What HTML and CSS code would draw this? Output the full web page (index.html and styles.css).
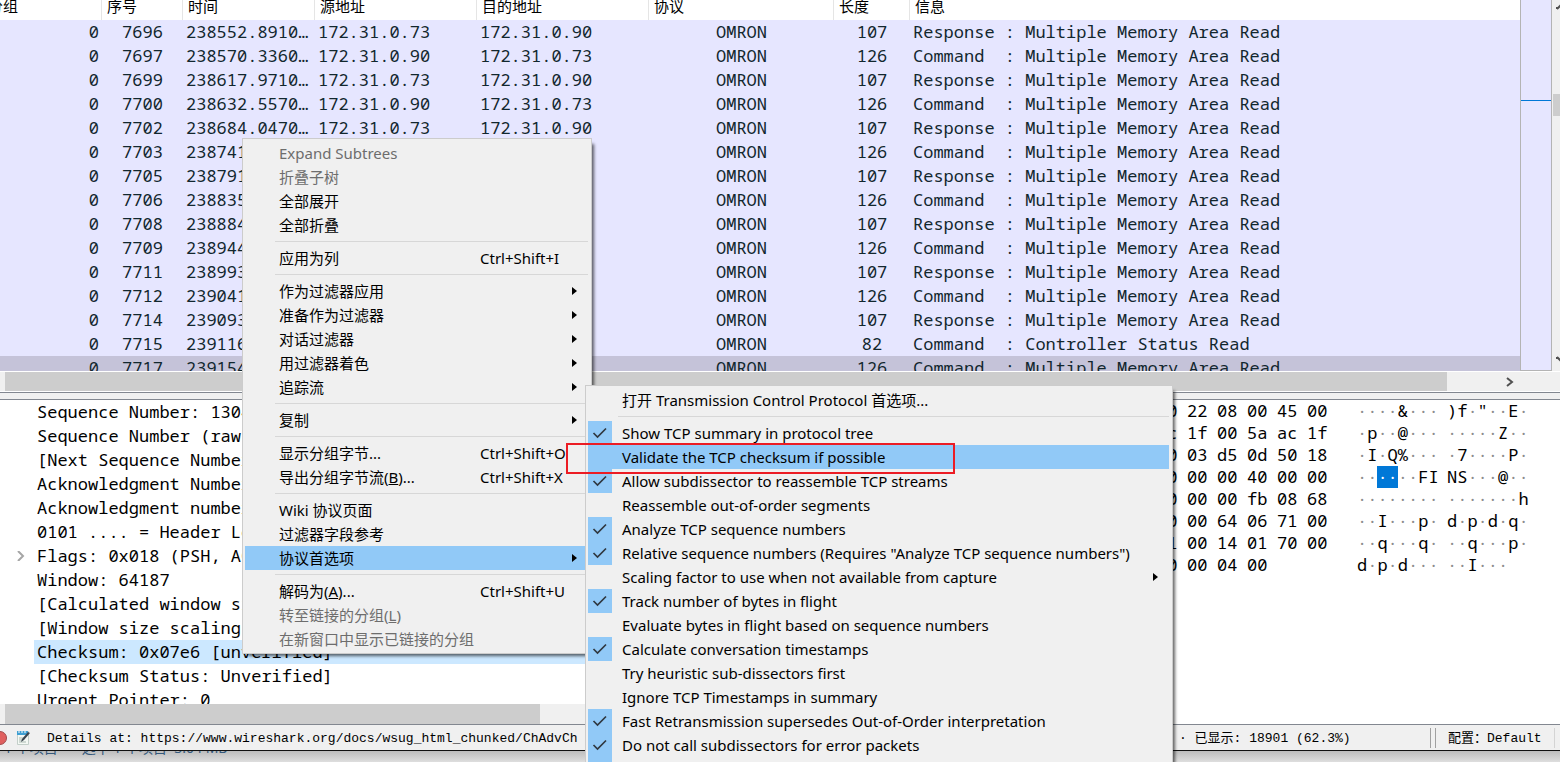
FILE: index.html
```html
<!DOCTYPE html>
<html lang="zh-CN">
<head>
<meta charset="utf-8">
<title>Wireshark</title>
<link rel="stylesheet" href="styles.css">
</head>
<body>
<div class="app">
  <section class="packets">
    <div class="packet-view">
      <table class="packet-table">
        <colgroup><col class="c-group"><col class="c-no"><col class="c-time"><col class="c-src"><col class="c-dst"><col class="c-proto"><col class="c-len"><col></colgroup>
        <thead><tr><th class="cut"><span>分组</span></th><th>序号</th><th>时间</th><th>源地址</th><th>目的地址</th><th>协议</th><th>长度</th><th>信息</th></tr></thead>
        <tbody>
          <tr><td>0</td><td>7696</td><td>238552.8910…</td><td>172.31.0.73</td><td>172.31.0.90</td><td>OMRON</td><td>107</td><td>Response : Multiple Memory Area Read</td></tr>
          <tr><td>0</td><td>7697</td><td>238570.3360…</td><td>172.31.0.90</td><td>172.31.0.73</td><td>OMRON</td><td>126</td><td>Command  : Multiple Memory Area Read</td></tr>
          <tr><td>0</td><td>7699</td><td>238617.9710…</td><td>172.31.0.73</td><td>172.31.0.90</td><td>OMRON</td><td>107</td><td>Response : Multiple Memory Area Read</td></tr>
          <tr><td>0</td><td>7700</td><td>238632.5570…</td><td>172.31.0.90</td><td>172.31.0.73</td><td>OMRON</td><td>126</td><td>Command  : Multiple Memory Area Read</td></tr>
          <tr><td>0</td><td>7702</td><td>238684.0470…</td><td>172.31.0.73</td><td>172.31.0.90</td><td>OMRON</td><td>107</td><td>Response : Multiple Memory Area Read</td></tr>
          <tr><td>0</td><td>7703</td><td>238741</td><td></td><td></td><td>OMRON</td><td>126</td><td>Command  : Multiple Memory Area Read</td></tr>
          <tr><td>0</td><td>7705</td><td>238791</td><td></td><td></td><td>OMRON</td><td>107</td><td>Response : Multiple Memory Area Read</td></tr>
          <tr><td>0</td><td>7706</td><td>238835</td><td></td><td></td><td>OMRON</td><td>126</td><td>Command  : Multiple Memory Area Read</td></tr>
          <tr><td>0</td><td>7708</td><td>238884</td><td></td><td></td><td>OMRON</td><td>107</td><td>Response : Multiple Memory Area Read</td></tr>
          <tr><td>0</td><td>7709</td><td>238944</td><td></td><td></td><td>OMRON</td><td>126</td><td>Command  : Multiple Memory Area Read</td></tr>
          <tr><td>0</td><td>7711</td><td>238993</td><td></td><td></td><td>OMRON</td><td>107</td><td>Response : Multiple Memory Area Read</td></tr>
          <tr><td>0</td><td>7712</td><td>239041</td><td></td><td></td><td>OMRON</td><td>126</td><td>Command  : Multiple Memory Area Read</td></tr>
          <tr><td>0</td><td>7714</td><td>239093</td><td></td><td></td><td>OMRON</td><td>107</td><td>Response : Multiple Memory Area Read</td></tr>
          <tr><td>0</td><td>7715</td><td>239116</td><td></td><td></td><td>OMRON</td><td>82</td><td>Command  : Controller Status Read</td></tr>
          <tr class="current"><td>0</td><td>7717</td><td>239154</td><td></td><td></td><td>OMRON</td><td>126</td><td>Command  : Multiple Memory Area Read</td></tr>
        </tbody>
      </table>
    </div>
    <div class="minimap"><div class="marker"></div></div>
    <div class="vscroll">
      <svg class="arrow" viewBox="0 0 8 8"><path d="M5 7 9 3M5 7V5" /></svg>
      <div class="vthumb"></div>
      <svg class="arrow end" viewBox="0 0 8 8"><path d="M5 1 9 5M5 1V3" /></svg>
    </div>
  </section>
  <div class="hscroll list-scroll"><div class="hthumb"></div>
    <svg class="chevron" viewBox="0 0 10 10"><path d="M2 1 7 5 2 9"/></svg>
  </div>
  <div class="splitter"></div>
  <section class="panes">
    <div class="details">
      <div class="tree">
        <div class="line">Sequence Number: 1304</div>
        <div class="line">Sequence Number (raw)</div>
        <div class="line">[Next Sequence Number</div>
        <div class="line">Acknowledgment Number</div>
        <div class="line">Acknowledgment number</div>
        <div class="line">0101 .... = Header Le</div>
        <div class="line branch"><svg class="twisty" viewBox="0 0 10 10"><path d="M2 0 7 5 2 10"/></svg>Flags: 0x018 (PSH, AC</div>
        <div class="line">Window: 64187</div>
        <div class="line">[Calculated window si</div>
        <div class="line">[Window size scaling</div>
        <div class="line picked">Checksum: 0x07e6 [unverified]</div>
        <div class="line">[Checksum Status: Unverified]</div>
        <div class="line">Urgent Pointer: 0</div>
      </div>
      <div class="hscroll"><div class="hthumb short"></div></div>
    </div>
    <div class="bytes">
      <table class="hex">
        <tr><td>00</td><td>22</td><td>08</td><td>00</td><td>45</td><td>00</td></tr>
        <tr><td>ac</td><td>1f</td><td>00</td><td>5a</td><td>ac</td><td>1f</td></tr>
        <tr><td>00</td><td>03</td><td>d5</td><td>0d</td><td>50</td><td>18</td></tr>
        <tr><td>00</td><td>00</td><td>00</td><td>40</td><td>00</td><td>00</td></tr>
        <tr><td>00</td><td>00</td><td>00</td><td>fb</td><td>08</td><td>68</td></tr>
        <tr><td>00</td><td>00</td><td>64</td><td>06</td><td>71</td><td>00</td></tr>
        <tr><td>01</td><td>00</td><td>14</td><td>01</td><td>70</td><td>00</td></tr>
        <tr><td>00</td><td>00</td><td>04</td><td>00</td><td></td><td></td></tr>
      </table>
      <table class="ascii">
        <tr><td>····<b>&amp;</b>···</td><td><b>)f</b>·<b>"</b>··<b>E</b>·</td></tr>
        <tr><td>·<b>p</b>··<b>@</b>···</td><td>·····<b>Z</b>··</td></tr>
        <tr><td>·<b>I</b>·<b>Q%</b>···</td><td>·<b>7</b>····<b>P</b>·</td></tr>
        <tr><td>··<mark>··</mark>··<b>FI</b></td><td><b>NS</b>···<b>@</b>··</td></tr>
        <tr><td>········</td><td>·······<b>h</b></td></tr>
        <tr><td>··<b>I</b>···<b>p</b>·</td><td><b>d</b>·<b>p</b>·<b>d</b>·<b>q</b>·</td></tr>
        <tr><td>··<b>q</b>···<b>q</b>·</td><td>··<b>q</b>···<b>p</b>·</td></tr>
        <tr><td><b>d</b>·<b>p</b>·<b>d</b>···</td><td>··<b>I</b>···</td></tr>
      </table>
    </div>
  </section>
  <footer class="status">
    <svg class="expert" viewBox="0 0 8 16"><circle cx="0" cy="8" r="6.5" fill="#e0605f" stroke="#a04a4c"/></svg>
    <svg class="note" viewBox="0 0 16 16"><path d="M1.5 1.500h11v13h-11z" fill="#f4f8f4" stroke="#c3cfc9"/><path d="M1 1h11v4H1z" fill="#3f9fd2"/><path d="M3 1v2M6 1v2M9 1v2" stroke="#fff"/><path d="M3 8h5M3 10h4M3 12h7" stroke="#a9b9b0"/><path d="M6 9 12 2l2 1-6 7-3 2z" fill="#3c4650"/></svg>
    <span class="tip">Details at: https://www.wireshark.org/docs/wsug_html_chunked/ChAdvCh</span>
    <span class="shown">· 已显示: 18901 (62.3%)</span>
    <span class="profile">配置：Default</span>
  </footer>
  <div class="behind"><span>1 个项目</span><span>选中 1 个项目&nbsp; 3.04 MB</span></div>
</div>

<div class="menu context" role="menu">
  <button class="item" disabled>Expand Subtrees</button>
  <button class="item" disabled>折叠子树</button>
  <button class="item">全部展开</button>
  <button class="item">全部折叠</button>
  <hr>
  <button class="item">应用为列<kbd>Ctrl+Shift+I</kbd></button>
  <hr>
  <button class="item more">作为过滤器应用</button>
  <button class="item more">准备作为过滤器</button>
  <button class="item more">对话过滤器</button>
  <button class="item more">用过滤器着色</button>
  <button class="item more">追踪流</button>
  <hr>
  <button class="item more">复制</button>
  <hr>
  <button class="item">显示分组字节...<kbd>Ctrl+Shift+O</kbd></button>
  <button class="item"><span>导出分组字节流(<u>B</u>)...</span><kbd>Ctrl+Shift+X</kbd></button>
  <hr>
  <button class="item">Wiki 协议页面</button>
  <button class="item">过滤器字段参考</button>
  <button class="item more active">协议首选项</button>
  <hr>
  <button class="item"><span>解码为(<u>A</u>)...</span><kbd>Ctrl+Shift+U</kbd></button>
  <button class="item" disabled><span>转至链接的分组(<u>L</u>)</span></button>
  <button class="item" disabled>在新窗口中显示已链接的分组</button>
</div>

<div class="menu prefs" role="menu">
  <button class="item">打开 Transmission Control Protocol 首选项...</button>
  <hr>
  <label class="item check"><input type="checkbox" checked>Show TCP summary in protocol tree</label>
  <label class="item check active"><input type="checkbox">Validate the TCP checksum if possible<span class="callout"></span></label>
  <label class="item check"><input type="checkbox" checked>Allow subdissector to reassemble TCP streams</label>
  <label class="item check"><input type="checkbox">Reassemble out-of-order segments</label>
  <label class="item check"><input type="checkbox" checked>Analyze TCP sequence numbers</label>
  <label class="item check"><input type="checkbox" checked>Relative sequence numbers (Requires "Analyze TCP sequence numbers")</label>
  <button class="item more">Scaling factor to use when not available from capture</button>
  <label class="item check"><input type="checkbox" checked>Track number of bytes in flight</label>
  <label class="item check"><input type="checkbox">Evaluate bytes in flight based on sequence numbers</label>
  <label class="item check"><input type="checkbox" checked>Calculate conversation timestamps</label>
  <label class="item check"><input type="checkbox">Try heuristic sub-dissectors first</label>
  <label class="item check"><input type="checkbox">Ignore TCP Timestamps in summary</label>
  <label class="item check"><input type="checkbox" checked>Fast Retransmission supersedes Out-of-Order interpretation</label>
  <label class="item check"><input type="checkbox" checked>Do not call subdissectors for error packets</label>
  <div class="item next"></div>
</div>
</body>
</html>
```

FILE: styles.css
```css
* { box-sizing: border-box; }
:root {
  --mono: "Noto Sans Mono", "Liberation Mono", monospace;
  --ui: "Noto Sans", "Noto Sans CJK SC", sans-serif;
  --song: "Liberation Mono", "Noto Sans CJK SC", monospace;
  --face: #f0f0f0;
  --thumb: #cdcdcd;
  --accent: #91c9f7;
}
body { margin: 0; height: 100vh; overflow: hidden; position: relative; background: #fff; color: #000; font-family: var(--ui); }
svg { display: block; fill: none; }
table { border-collapse: separate; border-spacing: 0; }
th, td { padding: 0; }

.app { height: 100vh; display: flex; flex-direction: column; }

/* packet list */
.packets { flex: 371 0 0; min-height: 0; display: flex; overflow: hidden; background: var(--face); }
.packet-view { flex: 1; min-width: 0; overflow: hidden; background: #fff; }
.packet-table { width: 100%; table-layout: fixed; font: 17px/24px var(--mono); color: #12272e; }
.c-group { width: 102px; }
.c-no { width: 81px; }
.c-time { width: 132px; }
.c-src { width: 162px; }
.c-dst { width: 172px; }
.c-proto { width: 185px; }
.c-len { width: 76px; }
.packet-table th { height: 20px; padding: 0 0 0 5px; font: 15px/12px "Noto Sans CJK SC", sans-serif; text-align: left; vertical-align: top; color: #000; border-right: 1px solid #e5e5e5; }
.packet-table th.cut { padding-left: 0; }
.cut span { display: block; margin-left: -12px; }
.packet-table th:last-child { border-right: 0; }
.packet-table td { height: 24px; padding-left: 3px; white-space: pre; }
.packet-table tbody tr { background: #e6e6ff; }
.packet-table tbody tr.current { background: #c5c3d9; }
.packet-table td:nth-child(1) { text-align: right; padding-right: 3px; }
.packet-table td:nth-child(2), .packet-table td:nth-child(6), .packet-table td:nth-child(7) { text-align: center; padding-left: 0; }

.minimap { flex: 0 0 32px; border: 1px solid #b4b4b4; border-top: 0; background: #e6e6ff; padding-top: 100px; }
.marker { height: 1px; background: #0078d7; }
.vscroll { flex: 0 0 8px; display: flex; flex-direction: column; overflow: hidden; }
.arrow { width: 8px; height: 8px; margin-top: 2px; flex: none; stroke: #505050; stroke-width: 2; }
.arrow.end { margin-top: auto; margin-bottom: 7px; }
.vthumb { height: 22px; margin: 84px 0 0 1px; background: var(--thumb); }

.hscroll { flex: 0 0 20px; display: flex; align-items: center; background: var(--face); padding-left: 5px; }
.hthumb { flex: 1; align-self: stretch; background: var(--thumb); }
.hthumb.short { flex: 0 0 535px; }
.list-scroll { flex-basis: 21px; padding-right: 45px; border-top: 1px solid #fff; border-bottom: 1px solid #fff; }
.chevron { width: 10px; height: 10px; margin-left: 58px; stroke: #505050; stroke-width: 2; }
.splitter { flex: 0 0 8px; background: var(--face); border-top: 1px solid #828790; border-bottom: 1px solid #828790; }

/* details and bytes */
.panes { flex: 324 0 0; min-height: 0; display: flex; }
.details { flex: 1; min-width: 0; display: flex; flex-direction: column; }
.tree { flex: 1; min-height: 0; overflow: hidden; font: 17px/24px var(--mono); }
.line { height: 24px; margin-left: 34px; padding-left: 3px; white-space: pre; }
.branch { display: flex; align-items: center; margin-left: 16px; padding-left: 0; }
.twisty { width: 10px; height: 10px; margin-right: 11px; stroke: #a6a6a6; stroke-width: 2; }
.picked { background: #cce8ff; }
.bytes { flex: 0 0 600px; display: flex; justify-content: flex-end; align-items: flex-start; gap: 20px; padding-right: 23px; font: 17px/22px var(--mono); }
.hex td { width: 30px; height: 22px; }
.ascii td { width: 90px; height: 22px; color: #8c8c8c; white-space: pre; }
.ascii b { font-weight: normal; color: #000; }
.ascii mark { display: inline-block; height: 22px; background: #0078d7; color: #fff; vertical-align: top; }

/* status bar */
.status { flex: 0 0 27px; display: flex; align-items: center; background: var(--face); border-top: 1px solid #828790; border-bottom: 1px solid #111; font: 13px/20px var(--song); white-space: pre; }
.expert { width: 8px; height: 16px; margin-right: 8px; }
.note { width: 16px; height: 16px; margin-right: 15px; }
.tip { flex: 1; min-width: 0; overflow: hidden; padding-top: 3px; }
.shown { flex: 0 0 256px; padding-top: 3px; }
.profile { flex: 0 0 120px; height: 20px; line-height: 22px; padding-left: 12px; border-left: 1px solid #a0a0a0; border-right: 1px solid #d4d4d4; margin-right: 5px; box-shadow: -4px 0 0 0 var(--face), -5px 0 0 0 #a0a0a0; }
.behind { flex: 0 0 11px; display: flex; gap: 24px; padding-left: 4px; overflow: hidden; background: linear-gradient(#bdbdbd, #dedede); font: 14px/22px var(--ui); color: #35597c; }
.behind span { margin-top: -14px; }

/* popup menus */
.menu { position: absolute; display: flex; flex-direction: column; padding: 2px 3px 2px 2px; background: var(--face); border: 1px solid #ccc; box-shadow: 4px 4px 3px -2px rgba(0, 0, 0, .6); font: 15px/24px var(--ui); }
.menu hr { width: auto; height: 1px; margin: 4px 0 4px 30px; border: 0; background: #d7d7d7; }
.item { display: flex; flex: none; align-items: center; height: 24px; padding: 0 16px 0 34px; border: 0; background: none; font: inherit; color: #000; text-align: left; white-space: pre; }
.item:disabled { color: #6d6d6d; }
.item kbd { font: inherit; width: 92px; margin-left: auto; }
.item.more { padding-right: 11px; }
.item.more::after { content: ""; margin-left: auto; border: 4px solid transparent; border-left: 5px solid #000; border-right: 0; }
.item.active { background: var(--accent); }
.context { left: 242px; top: 138px; width: 350px; }
.prefs { left: 585px; top: 385px; width: 588px; }
.check { position: relative; padding-left: 0; }
.check input { appearance: none; flex: none; width: 24px; height: 24px; margin: 0 10px 0 0; }
.check input:checked { background: var(--accent) url("data:image/svg+xml,%3Csvg xmlns='http://www.w3.org/2000/svg' viewBox='0 0 24 24' fill='none' stroke='%23303840' stroke-width='1.7'%3E%3Cpath d='M5.500 12l4 4 8.500-8.500'/%3E%3C/svg%3E"); }
.next { width: 24px; padding: 0; background: var(--accent); }
.callout { position: absolute; z-index: 1; left: -22px; top: -2px; width: 389px; height: 31px; border: 2px solid #ec1c24; pointer-events: none; }
```
